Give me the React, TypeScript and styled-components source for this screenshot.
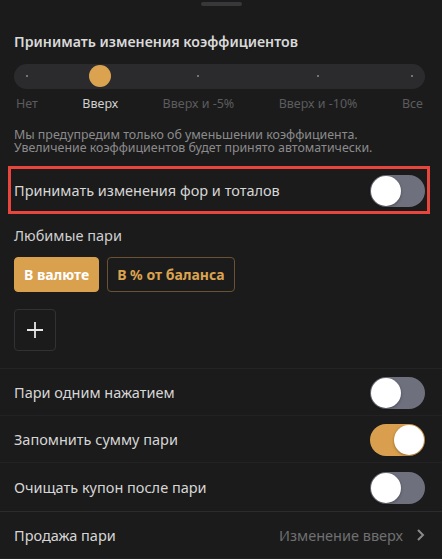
import styled, { createGlobalStyle } from "styled-components";

const GlobalStyle = createGlobalStyle`
  html, body {
    margin: 0;
    padding: 0;
    background: #1b1b1b;
  }
  body {
    font-family: "Noto Sans", "Open Sans", sans-serif;
    color: #d6d6d6;
    overflow: hidden;
  }
`;

const Sheet = styled.div`
  width: 442px;
  height: 559px;
  display: flex;
  flex-direction: column;
  background: #1b1b1b;
  overflow: hidden;
`;

const Handle = styled.div`
  align-self: center;
  width: 41px;
  height: 4px;
  margin-top: 2px;
  margin-left: 1px;
  border-radius: 2px;
  background: #38383b;
`;

const Section = styled.div`
  padding: 0 17px 0 14px;
  display: flex;
  flex-direction: column;
`;

const Title = styled.div`
  margin-top: 26px;
  font-size: 14.2px;
  font-weight: 600;
  color: #d9d9d9;
  line-height: 20px;
`;

const Slider = styled.div`
  position: relative;
  margin-top: 12px;

  &::before {
    content: "";
    position: absolute;
    left: 0;
    right: 0;
    top: 0;
    height: 25px;
    border-radius: 13px;
    background: #2b2b2e;
  }
`;

const Stops = styled.div`
  position: relative;
  display: flex;
  justify-content: space-between;
  padding: 0 2px;
`;

const Stop = styled.div`
  display: flex;
  flex-direction: column;
  align-items: center;
`;

const Marker = styled.div`
  height: 25px;
  display: flex;
  align-items: center;
  justify-content: center;
`;

const Dot = styled.div`
  width: 2px;
  height: 2px;
  border-radius: 1px;
  background: #8d8d90;
`;

const Thumb = styled.div`
  width: 22px;
  height: 22px;
  border-radius: 50%;
  background: #dba34f;
`;

const StopLabel = styled.div<{ $active?: boolean }>`
  margin-top: 7px;
  font-size: 12.5px;
  line-height: 16px;
  color: ${({ $active }) => ($active ? "#d0d0d0" : "#5c5c5e")};
  white-space: nowrap;
`;

const Hint = styled.div`
  margin-top: 16px;
  font-size: 12.4px;
  line-height: 13.5px;
  color: #8b8b8d;
`;

const Highlight = styled.div`
  margin: 11px 12px 0 8px;
  border: 3px solid #e8463c;
  padding: 0 2px 0 3px;
  height: 51px;
  box-sizing: border-box;
  display: flex;
  align-items: center;
  justify-content: space-between;
`;

const RowText = styled.div`
  font-size: 14.5px;
  color: #d6d6d6;
`;

const Toggle = styled.div<{ $on?: boolean }>`
  width: 55px;
  height: 32px;
  border-radius: 16px;
  padding: 1px;
  box-sizing: border-box;
  display: flex;
  justify-content: ${({ $on }) => ($on ? "flex-end" : "flex-start")};
  background: ${({ $on }) => ($on ? "#d99f4e" : "#6f707e")};
  margin-top: 2px;
`;

const Knob = styled.div`
  width: 30px;
  height: 30px;
  border-radius: 50%;
  background: #ffffff;
  box-shadow: 0 1px 3px rgba(0, 0, 0, 0.35);
`;

const SubTitle = styled.div`
  margin-top: 11px;
  font-size: 14.5px;
  line-height: 20px;
  color: #cfcfcf;
`;

const Choices = styled.div`
  margin-top: 12px;
  display: flex;
  gap: 8px;
`;

const Choice = styled.div<{ $selected?: boolean }>`
  height: 35px;
  box-sizing: border-box;
  padding: 0 9px;
  display: flex;
  align-items: center;
  border-radius: 4px;
  font-size: 14px;
  font-weight: 700;
  color: ${({ $selected }) => ($selected ? "#ffffff" : "#dba34f")};
  background: ${({ $selected }) => ($selected ? "#d9a04e" : "transparent")};
  border: 1px solid ${({ $selected }) => ($selected ? "#d9a04e" : "#6a5232")};
`;

const AddButton = styled.div`
  margin-top: 17px;
  width: 42px;
  height: 42px;
  box-sizing: border-box;
  border: 1px solid #323234;
  border-radius: 4px;
  display: flex;
  align-items: center;
  justify-content: center;
`;

const List = styled.div`
  margin-top: 17px;
  border-top: 1px solid #242426;
  display: flex;
  flex-direction: column;
`;

const Row = styled.div<{ $strong?: boolean }>`
  height: ${({ $strong }) => ($strong ? "48px" : "46px")};
  padding: 0 17px 0 14px;
  display: flex;
  align-items: center;
  justify-content: space-between;
  border-bottom: 1px solid ${({ $strong }) => ($strong ? "#2c2c2e" : "#222224")};
`;

const Value = styled.div`
  display: flex;
  align-items: center;
  gap: 13px;
  font-size: 14.5px;
  color: #6f6f71;
`;

const toggles = [
  { label: "Пари одним нажатием", on: false },
  { label: "Запомнить сумму пари", on: true },
  { label: "Очищать купон после пари", on: false },
];

const stops = ["Нет", "Вверх", "Вверх и -5%", "Вверх и -10%", "Все"];

export default function App() {
  const current = 1;

  return (
    <>
      <GlobalStyle />
      <Sheet>
        <Handle />
        <Section>
          <Title>Принимать изменения коэффициентов</Title>
          <Slider>
            <Stops>
              {stops.map((s, i) => (
                <Stop key={s}>
                  <Marker>{i === current ? <Thumb /> : <Dot />}</Marker>
                  <StopLabel $active={i === current}>{s}</StopLabel>
                </Stop>
              ))}
            </Stops>
          </Slider>
          <Hint>
            Мы предупредим только об уменьшении коэффициента.
            <br />
            Увеличение коэффициентов будет принято автоматически.
          </Hint>
        </Section>
        <Highlight>
          <RowText>Принимать изменения фор и тоталов</RowText>
          <Toggle>
            <Knob />
          </Toggle>
        </Highlight>
        <Section>
          <SubTitle>Любимые пари</SubTitle>
          <Choices>
            <Choice $selected>В валюте</Choice>
            <Choice>В % от баланса</Choice>
          </Choices>
          <AddButton>
            <svg width="18" height="18" viewBox="0 0 18 18">
              <path d="M9 1v16M1 9h16" stroke="#e6e6e6" strokeWidth="1.8" />
            </svg>
          </AddButton>
        </Section>
        <List>
          {toggles.map((t, i) => (
            <Row key={t.label} $strong={i === toggles.length - 1}>
              <RowText>{t.label}</RowText>
              <Toggle $on={t.on}>
                <Knob />
              </Toggle>
            </Row>
          ))}
          <Row>
            <RowText>Продажа пари</RowText>
            <Value>
              Изменение вверх
              <svg width="9" height="14" viewBox="0 0 9 14">
                <path d="M2 2l5 5-5 5" stroke="#8a8a8c" strokeWidth="2" fill="none" />
              </svg>
            </Value>
          </Row>
        </List>
      </Sheet>
    </>
  );
}
